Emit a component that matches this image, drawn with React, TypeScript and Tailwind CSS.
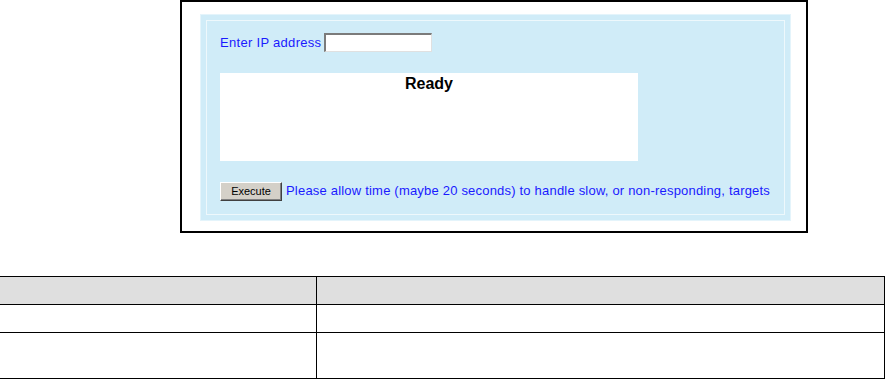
export default function App() {
  return (
    <div className="w-[886px] h-[379px] bg-white overflow-hidden" style={{ fontFamily: '"Liberation Sans", Arial, sans-serif' }}>
      <div className="ml-[180px] mt-[0px] w-[628px] h-[233px] border-2 border-black pl-[18px] pr-[15px] pt-[12px] pb-[10px]">
        <div className="h-full bg-[#d0ecf8] p-[5px] border border-[#e4f4fb]">
          <div className="h-full border border-[#eef8fc] pl-[13px] pt-[12px] flex flex-col">
            <div className="flex items-center h-[19px] text-[13px] text-[#1a1aff]">
              <span className="tracking-[0.3px]">Enter IP address</span>
              <div className="ml-[3px] w-[108px] h-[19px] bg-white border-t-2 border-l-2 border-t-[#7b7b7b] border-l-[#7b7b7b] border-r border-b border-r-[#e0e0e0] border-b-[#e0e0e0]" />
            </div>
            <div className="mt-[21px] w-[418px] h-[88px] bg-white flex justify-center">
              <span className="font-bold text-[16px] leading-[16px] text-black mt-[3px]">Ready</span>
            </div>
            <div className="mt-[20px] flex items-center h-[20px]">
              <div className="w-[62px] h-[19px] bg-[#d4d0c8] border border-t-white border-l-white border-r-[#404040] border-b-[#404040] flex items-center justify-center text-[11px] text-black shadow-[inset_-1px_-1px_0_#808080]">
                Execute
              </div>
              <span className="ml-[4px] text-[13px] text-[#1a1aff] tracking-[0.2px] whitespace-nowrap">
                Please allow time (maybe 20 seconds) to handle slow, or non-responding, targets
              </span>
            </div>
          </div>
        </div>
      </div>
      <div className="mt-[43px] w-[885px] border-t border-r border-black">
        <div className="grid grid-cols-[317px_1fr]">
          <div className="h-[28px] bg-[#dfdfdf] border-b border-r border-black" />
          <div className="h-[28px] bg-[#dfdfdf] border-b border-black" />
          <div className="h-[28px] border-b border-r border-black" />
          <div className="h-[28px] border-b border-black" />
          <div className="h-[46px] border-b border-r border-black" />
          <div className="h-[46px] border-b border-black" />
        </div>
      </div>
    </div>
  );
}
